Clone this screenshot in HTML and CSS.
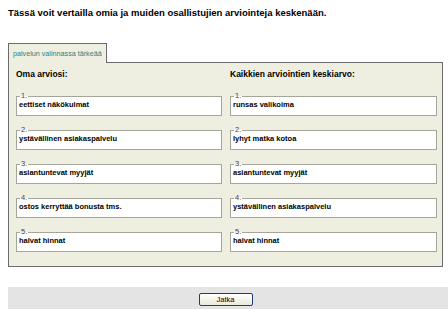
FILE: index.html
```html
<!DOCTYPE html>
<html lang="fi">
<head>
<meta charset="utf-8">
<link rel="stylesheet" href="styles.css">
</head>
<body>
<div class="page">
  <h1 class="title">Tässä voit vertailla omia ja muiden osallistujien arviointeja keskenään.</h1>
  <div class="tabs"><div class="tab">palvelun valinnassa tärkeää</div></div>
  <div class="panel">
    <div class="col">
      <h2 class="colhead">Oma arviosi:</h2>
      <fieldset class="rank"><legend>1.</legend><div class="val">eettiset näkökulmat</div></fieldset>
      <fieldset class="rank"><legend>2.</legend><div class="val">ystävällinen asiakaspalvelu</div></fieldset>
      <fieldset class="rank"><legend>3.</legend><div class="val">asiantuntevat myyjät</div></fieldset>
      <fieldset class="rank"><legend>4.</legend><div class="val">ostos kerryttää bonusta tms.</div></fieldset>
      <fieldset class="rank"><legend>5.</legend><div class="val">halvat hinnat</div></fieldset>
    </div>
    <div class="col">
      <h2 class="colhead">Kaikkien arviointien keskiarvo:</h2>
      <fieldset class="rank"><legend>1.</legend><div class="val">runsas valikoima</div></fieldset>
      <fieldset class="rank"><legend>2.</legend><div class="val">lyhyt matka kotoa</div></fieldset>
      <fieldset class="rank"><legend>3.</legend><div class="val">asiantuntevat myyjät</div></fieldset>
      <fieldset class="rank"><legend>4.</legend><div class="val">ystävällinen asiakaspalvelu</div></fieldset>
      <fieldset class="rank"><legend>5.</legend><div class="val">halvat hinnat</div></fieldset>
    </div>
  </div>
  <div class="footer"><button class="btn">Jatka</button></div>
</div>
</body>
</html>
```
FILE: styles.css
```css
html, body {
  margin: 0;
  padding: 0;
  background: #ffffff;
}
body {
  font-family: "Liberation Sans", Arial, sans-serif;
  color: #000;
}
.page {
  padding: 7px 5px 0 8px;
  width: 435px;
}
.title {
  margin: 0;
  font-size: 9.5px;
  font-weight: bold;
  line-height: 12px;
}
.tabs {
  display: flex;
  margin-top: 24px;
}
.tab {
  border: 1px solid #6b6b6b;
  border-bottom: none;
  background: #efefe1;
  color: #2f7f7f;
  font-size: 7.2px;
  height: 19px;
  line-height: 19px;
  padding: 0 4px 0 4px;
  white-space: nowrap;
  margin-bottom: -1px;
  position: relative;
  z-index: 1;
}
.panel {
  border: 1px solid #6b6b6b;
  background: #efefe1;
  display: grid;
  grid-template-columns: 206px 207px;
  column-gap: 8px;
  padding: 5px 6px 14px 7px;
}
.colhead {
  margin: 0 0 12px 0;
  font-size: 8.5px;
  font-weight: bold;
  line-height: 12px;
}
.rank {
  margin: 0 0 10px 0;
  padding: 0 3px 5px 2px;
  border: 1px solid #a5a59a;
  background: #ffffff;
  min-width: 0;
}
.rank:last-child {
  margin-bottom: 0;
}
.rank legend {
  font-size: 7.5px;
  color: #444;
  padding: 0 1px;
  margin-left: 1px;
  line-height: 8px;
}
.val {
  font-size: 7.5px;
  font-weight: bold;
  line-height: 10px;
}
.footer {
  margin: 20px -5px 0 0;
  background: #e4e4e4;
  height: 22px;
  display: flex;
  justify-content: center;
  align-items: center;
  padding-right: 5px;
}
.btn {
  width: 54px;
  height: 13px;
  font-family: "Liberation Sans", Arial, sans-serif;
  font-size: 7.5px;
  padding: 0;
  border: 1px solid #1c3f78;
  border-radius: 2px;
  background: linear-gradient(#ffffff, #ece9d8);
  margin-top: 2px;
}
```
